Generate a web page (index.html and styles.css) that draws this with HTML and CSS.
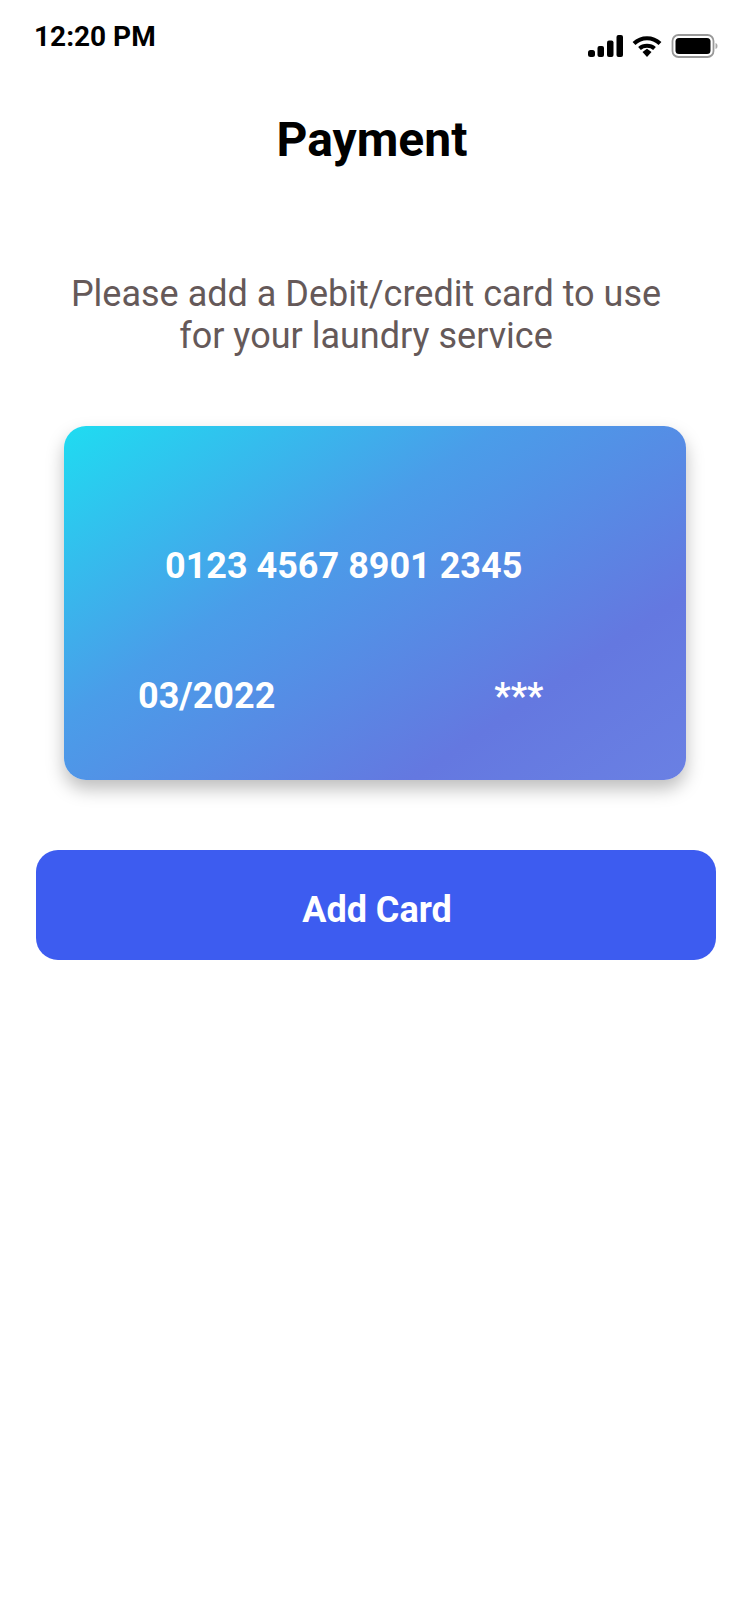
FILE: index.html
```html
<!DOCTYPE html>
<html lang="en">
<head>
	<meta charset="UTF-8">
	<title>Payment</title>
	<link rel="stylesheet" href="styles.css">
</head>
<body>
	<div class="status-bar">
		<span class="time">12:20 PM</span>
		<div class="status-icons">
			<svg class="icon-signal" width="35" height="22" viewBox="0 0 35 22">
				<rect x="0" y="15" width="7" height="7" rx="2.5"/>
				<rect x="9.5" y="11" width="6.5" height="11" rx="2"/>
				<rect x="19" y="5.5" width="6.5" height="16.5" rx="2"/>
				<rect x="28.5" y="0" width="6.5" height="22" rx="2"/>
			</svg>
			<svg class="icon-wifi" width="30" height="22" viewBox="0 0 30 22">
				<path d="M2 8.5C9.5 1.5 20.500 1.500 28 8.500" fill="none" stroke="#000" stroke-width="4.200"/>
				<path d="M7.500 13.500C11.500 9.800 18.500 9.800 22.500 13.500" fill="none" stroke="#000" stroke-width="4"/>
				<path d="M10.500 17 15 13.800 19.500 17 15 22Z"/>
			</svg>
			<svg class="icon-battery" width="47" height="24" viewBox="0 0 46 24">
				<rect x="1" y="1" width="41" height="22" rx="6" fill="none" stroke="#999" stroke-width="1.800"/>
				<rect x="4" y="4" width="35" height="16" rx="3.500"/>
				<path d="M44 9c1.500.5 2 1.500 2 3s-.5 2.500-2 3z" fill="#aaa"/>
			</svg>
		</div>
	</div>

	<h1 class="title">Payment</h1>
	<p class="intro">Please add a Debit/credit card to use<br>for your laundry service</p>

	<section class="card">
		<div class="card-number">0123 4567 8901 2345</div>
		<div class="card-row">
			<span>03/2022</span>
			<span class="card-cvv">***</span>
		</div>
	</section>

	<button class="add-btn">Add Card</button>
</body>
</html>
```

FILE: styles.css
```css
* {
	padding: 0;
	margin: 0;
	box-sizing: border-box;
}
html, body {
	height: 100%;
}
body {
	background: #fff;
	font-family: Roboto, "Liberation Sans", sans-serif;
	color: #000;
	overflow: hidden;
}
.status-bar {
	display: flex;
	justify-content: space-between;
	align-items: flex-start;
	height: 110px;
	padding: 18px 32px 0 34px;
}
.time {
	font-size: 28px;
	line-height: 37px;
	font-weight: 700;
}
.status-icons {
	display: flex;
	align-items: center;
	gap: 9px;
	margin-top: 16px;
}
.status-icons svg {
	display: block;
}
.title {
	font-size: 48px;
	line-height: 60px;
	font-weight: 700;
	text-align: center;
	padding-right: 6px;
}
.intro {
	margin-top: 103px;
	font-size: 36px;
	line-height: 42px;
	color: #655959;
	text-align: center;
	padding-right: 18px;
}
.card {
	width: 622px;
	height: 354px;
	margin: 69px 0 0 64px;
	padding: 120px 0 0 101px;
	border-radius: 22px;
	color: #fff;
	font-size: 36px;
	line-height: 40px;
	font-weight: 700;
	background: linear-gradient(146deg, #1fdcf1 0%, #4a9de9 38%, #6478e0 76%, #6a80e3 100%);
	box-shadow: 0 9px 18px rgba(0, 0, 0, 0.26);
}
.card-row {
	display: flex;
	margin: 90px 0 0 -27px;
}
.card-cvv {
	margin-left: 219px;
}
.add-btn {
	display: block;
	width: 680px;
	height: 110px;
	margin: 70px 0 0 36px;
	padding: 10px 0 0 2px;
	border: 0;
	border-radius: 22px;
	background: #3d5cf0;
	color: #fff;
	font-family: inherit;
	font-size: 36px;
	font-weight: 700;
}
```
